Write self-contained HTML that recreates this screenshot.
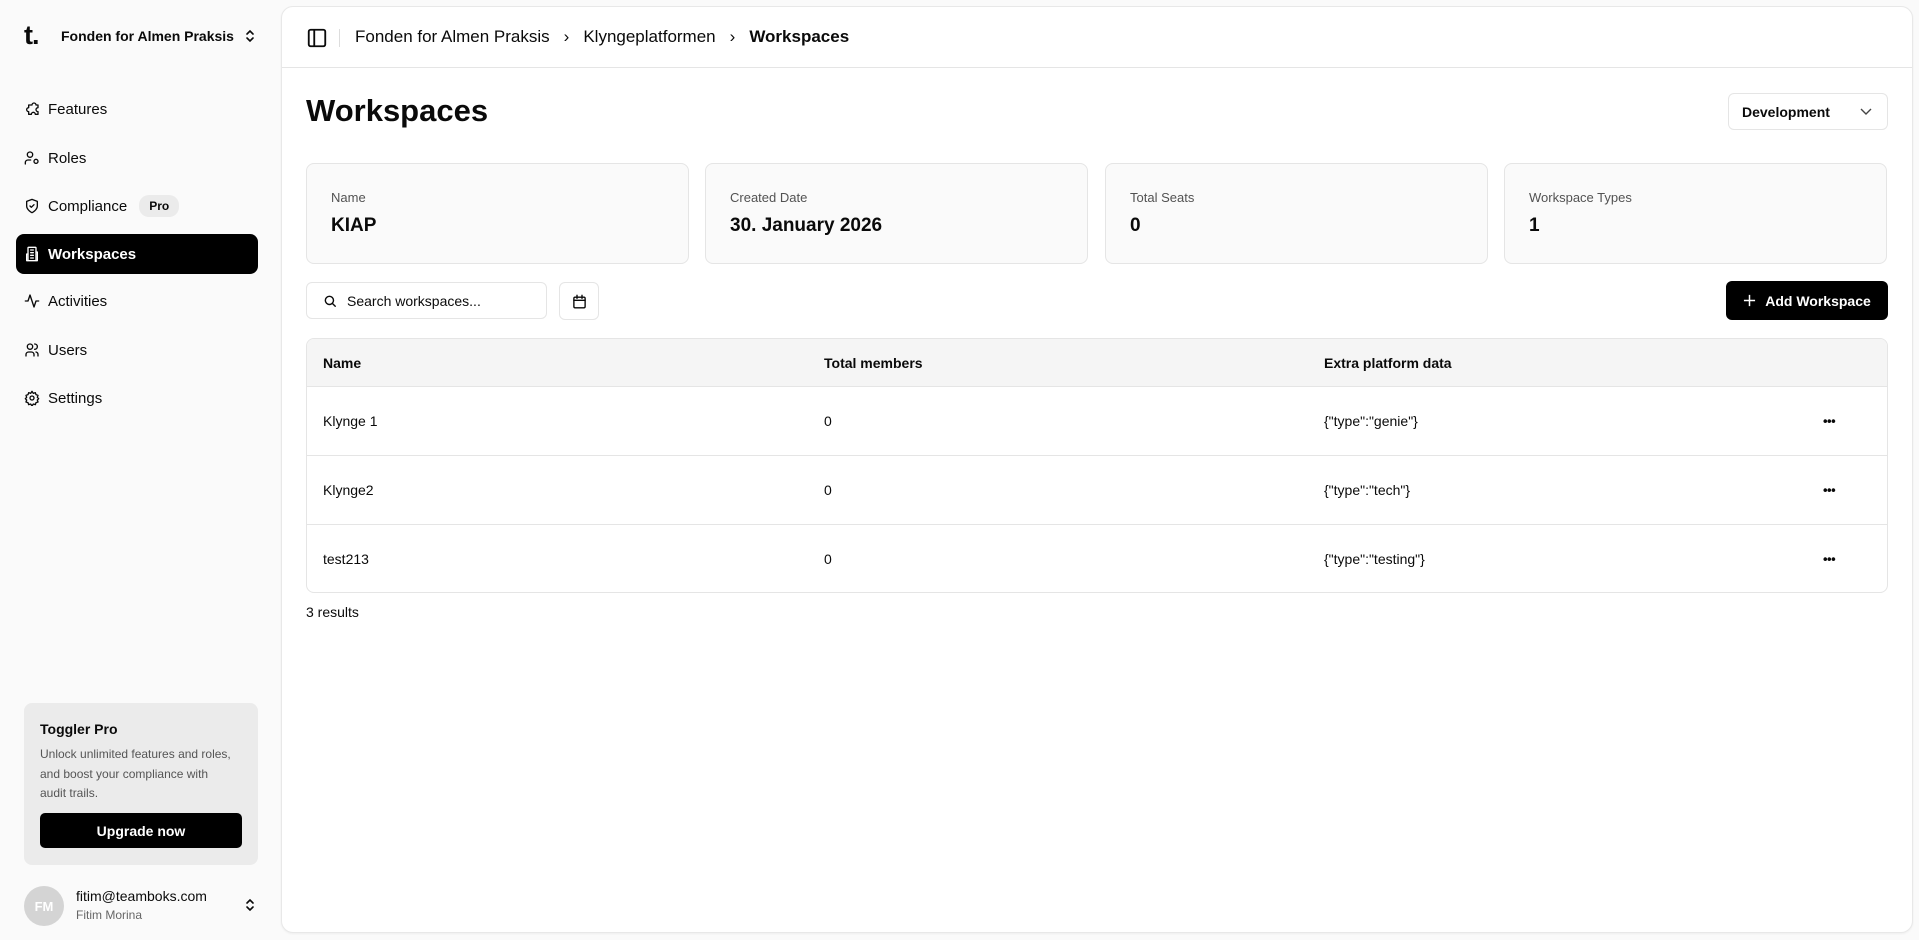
<!DOCTYPE html>
<html><head><meta charset="utf-8"><style>
*{box-sizing:border-box;margin:0;padding:0}
body{width:1919px;height:940px;background:#fafafa;font-family:"Liberation Sans",Arial,sans-serif;color:#0a0a0a;position:relative;overflow:hidden}
.abs{position:absolute}
.side{left:0;top:0;width:281px;height:940px;background:#fafafa}
.nav{position:absolute;left:16px;width:242px;height:40px;display:flex;align-items:center;padding-left:8px;font-size:15px;gap:8px}
.nav svg{width:16px;height:16px;fill:none;stroke:#0a0a0a;stroke-width:2;stroke-linecap:round;stroke-linejoin:round}
.nav.act{background:#000;color:#fff;border-radius:8px;font-weight:bold}
.nav.act svg{stroke:#fff}
.main{left:281px;top:6px;width:1632px;height:927px;background:#fff;border:1px solid #e8e8e8;border-radius:12px;box-shadow:0 1px 2px rgba(0,0,0,.05)}
.card{position:absolute;top:156px;height:101px;width:383px;background:#fafafa;border:1px solid #e5e5e5;border-radius:8px}
.card .l{position:absolute;left:24px;top:26px;font-size:13px;color:#525252}
.card .v{position:absolute;left:24px;top:51px;font-size:19px;font-weight:bold}
.row{position:absolute;left:0;width:100%;font-size:14px}
.row span{position:absolute;top:50%;transform:translateY(-50%)}
.dots{left:1516px;font-weight:bold;font-size:13px;letter-spacing:-0.5px}
</style></head><body>
<div class="abs side">
  <div class="abs" style="left:24px;top:20px;font-size:27px;font-weight:bold;letter-spacing:-1px">t.</div>
  <div class="abs" style="left:61px;top:28px;font-size:14px;font-weight:bold">Fonden for Almen Praksis</div>
  <svg class="abs" style="left:243px;top:28px" width="14" height="16" viewBox="0 0 14 16" fill="none" stroke="#0a0a0a" stroke-width="1.6" stroke-linecap="round"><path d="M4 6l3-3 3 3M4 10l3 3 3-3"/></svg>

  <div class="nav" style="top:89px"><svg viewBox="0 0 24 24"><path d="M15 3a3 3 0 0 1 3 3h3v4a3 3 0 0 0 0 6v4h-4a3 3 0 0 0-6 0H7v-4a3 3 0 0 1 0-6V6h5a3 3 0 0 1 3-3z"/></svg>Features</div>
  <div class="nav" style="top:138px"><svg viewBox="0 0 24 24"><circle cx="9" cy="7" r="4"/><path d="M2 21v-2a4 4 0 0 1 4-4h4"/><circle cx="18" cy="17" r="3"/></svg>Roles</div>
  <div class="nav" style="top:186px"><svg viewBox="0 0 24 24"><path d="M12 22s8-4 8-10V5l-8-3-8 3v7c0 6 8 10 8 10z"/><path d="M9 12l2 2 4-4"/></svg>Compliance<span style="background:#ebebeb;border-radius:10px;font-size:12px;font-weight:bold;padding:4px 10px;margin-left:4px">Pro</span></div>
  <div class="nav act" style="top:234px"><svg viewBox="0 0 24 24"><rect x="6" y="2" width="12" height="20" rx="1"/><path d="M6 12H4v10h2M18 9h2v13h-2M10 6h4M10 10h4M10 14h4M10 18h4"/></svg>Workspaces</div>
  <div class="nav" style="top:281px"><svg viewBox="0 0 24 24"><path d="M22 12h-4l-3 9L9 3l-3 9H2"/></svg>Activities</div>
  <div class="nav" style="top:330px"><svg viewBox="0 0 24 24"><circle cx="9" cy="7" r="4"/><path d="M3 21v-2a4 4 0 0 1 4-4h4a4 4 0 0 1 4 4v2M16 3a4 4 0 0 1 0 8M21 21v-2a4 4 0 0 0-3-4"/></svg>Users</div>
  <div class="nav" style="top:378px"><svg viewBox="0 0 24 24"><circle cx="12" cy="12" r="3"/><path d="M12 2l2 3 3-1 1 3 3 1-1 3 2 2-2 2 1 3-3 1-1 3-3-1-2 3-2-3-3 1-1-3-3-1 1-3-2-2 2-2-1-3 3-1 1-3 3 1z"/></svg>Settings</div>

  <div class="abs" style="left:24px;top:703px;width:234px;height:162px;background:#ebebeb;border-radius:8px">
    <div class="abs" style="left:16px;top:18px;font-size:14px;font-weight:bold">Toggler Pro</div>
    <div class="abs" style="left:16px;top:42px;width:196px;font-size:12px;line-height:19.5px;color:#555">Unlock unlimited features and roles, and boost your compliance with audit trails.</div>
    <div class="abs" style="left:16px;top:110px;width:202px;height:35px;background:#000;color:#fff;border-radius:5px;font-size:14px;font-weight:bold;display:flex;align-items:center;justify-content:center">Upgrade now</div>
  </div>
  <div class="abs" style="left:24px;top:886px;width:40px;height:40px;border-radius:50%;background:#d4d4d4;color:#fff;font-size:13px;font-weight:bold;display:flex;align-items:center;justify-content:center">FM</div>
  <div class="abs" style="left:76px;top:888px;font-size:14px">fitim@teamboks.com</div>
  <div class="abs" style="left:76px;top:908px;font-size:12px;color:#666">Fitim Morina</div>
  <svg class="abs" style="left:243px;top:897px" width="14" height="16" viewBox="0 0 14 16" fill="none" stroke="#0a0a0a" stroke-width="1.6" stroke-linecap="round"><path d="M4 6l3-3 3 3M4 10l3 3 3-3"/></svg>
</div>

<div class="abs main">
  <div class="abs" style="left:0;top:60px;width:100%;border-top:1px solid #e5e5e5"></div>
  <svg class="abs" style="left:24px;top:20px" width="22" height="22" viewBox="0 0 24 24" fill="none" stroke="#0a0a0a" stroke-width="2"><rect x="3" y="3" width="18" height="18" rx="2"/><path d="M9 3v18"/></svg>
  <div class="abs" style="left:57px;top:22px;height:18px;border-left:1px solid #ddd"></div>
  <div class="abs" style="left:73px;top:20px;font-size:17px;display:flex;gap:14px;align-items:center">
    <span>Fonden for Almen Praksis</span><span style="font-size:17px">›</span><span>Klyngeplatformen</span><span style="font-size:17px">›</span><b>Workspaces</b>
  </div>
  <div class="abs" style="left:24px;top:86px;font-size:31px;font-weight:bold">Workspaces</div>
  <div class="abs" style="left:1446px;top:86px;width:160px;height:37px;border:1px solid #e5e5e5;border-radius:6px;font-size:14px;font-weight:bold;display:flex;align-items:center;padding-left:13px">Development
    <svg class="abs" style="right:14px;top:12px" width="14" height="12" viewBox="0 0 14 12" fill="none" stroke="#444" stroke-width="1.4"><path d="M2 3l5 5 5-5"/></svg></div>

  <div class="card" style="left:24px"><div class="l">Name</div><div class="v">KIAP</div></div>
  <div class="card" style="left:423px"><div class="l">Created Date</div><div class="v">30. January 2026</div></div>
  <div class="card" style="left:823px"><div class="l">Total Seats</div><div class="v">0</div></div>
  <div class="card" style="left:1222px"><div class="l">Workspace Types</div><div class="v">1</div></div>

  <div class="abs" style="left:24px;top:275px;width:241px;height:37px;border:1px solid #e5e5e5;border-radius:6px;display:flex;align-items:center;padding-left:16px;gap:10px;font-size:14px">
    <svg width="14" height="14" viewBox="0 0 24 24" fill="none" stroke="#0a0a0a" stroke-width="2.4" stroke-linecap="round"><circle cx="11" cy="11" r="7"/><path d="M21 21l-5-5"/></svg>Search workspaces...</div>
  <div class="abs" style="left:277px;top:275px;width:40px;height:38px;border:1px solid #e5e5e5;border-radius:6px;display:flex;align-items:center;justify-content:center">
    <svg width="15" height="15" viewBox="0 0 24 24" fill="none" stroke="#0a0a0a" stroke-width="2.2" stroke-linecap="round"><rect x="3" y="5" width="18" height="17" rx="2"/><path d="M8 2v5M16 2v5M3 10h18"/></svg></div>
  <div class="abs" style="left:1444px;top:274px;width:162px;height:39px;background:#000;color:#fff;border-radius:6px;font-size:14px;font-weight:bold;display:flex;align-items:center;justify-content:center;gap:9px">
    <svg width="13" height="13" viewBox="0 0 14 14" stroke="#fff" stroke-width="1.6"><path d="M7 1v12M1 7h12"/></svg>Add Workspace</div>

  <div class="abs" style="left:24px;top:331px;width:1582px;height:255px;border:1px solid #e5e5e5;border-radius:8px;overflow:hidden">
    <div class="row" style="top:0;height:48px;background:#f5f5f5;border-bottom:1px solid #e5e5e5;font-weight:bold"><span style="left:16px">Name</span><span style="left:517px">Total members</span><span style="left:1017px">Extra platform data</span></div>
    <div class="row" style="top:48px;height:69px;border-bottom:1px solid #e5e5e5"><span style="left:16px">Klynge 1</span><span style="left:517px">0</span><span style="left:1017px">{"type":"genie"}</span><span class="dots">•••</span></div>
    <div class="row" style="top:117px;height:69px;border-bottom:1px solid #e5e5e5"><span style="left:16px">Klynge2</span><span style="left:517px">0</span><span style="left:1017px">{"type":"tech"}</span><span class="dots">•••</span></div>
    <div class="row" style="top:186px;height:68px"><span style="left:16px">test213</span><span style="left:517px">0</span><span style="left:1017px">{"type":"testing"}</span><span class="dots">•••</span></div>
  </div>
  <div class="abs" style="left:24px;top:597px;font-size:14px">3 results</div>
</div>
</body></html>
